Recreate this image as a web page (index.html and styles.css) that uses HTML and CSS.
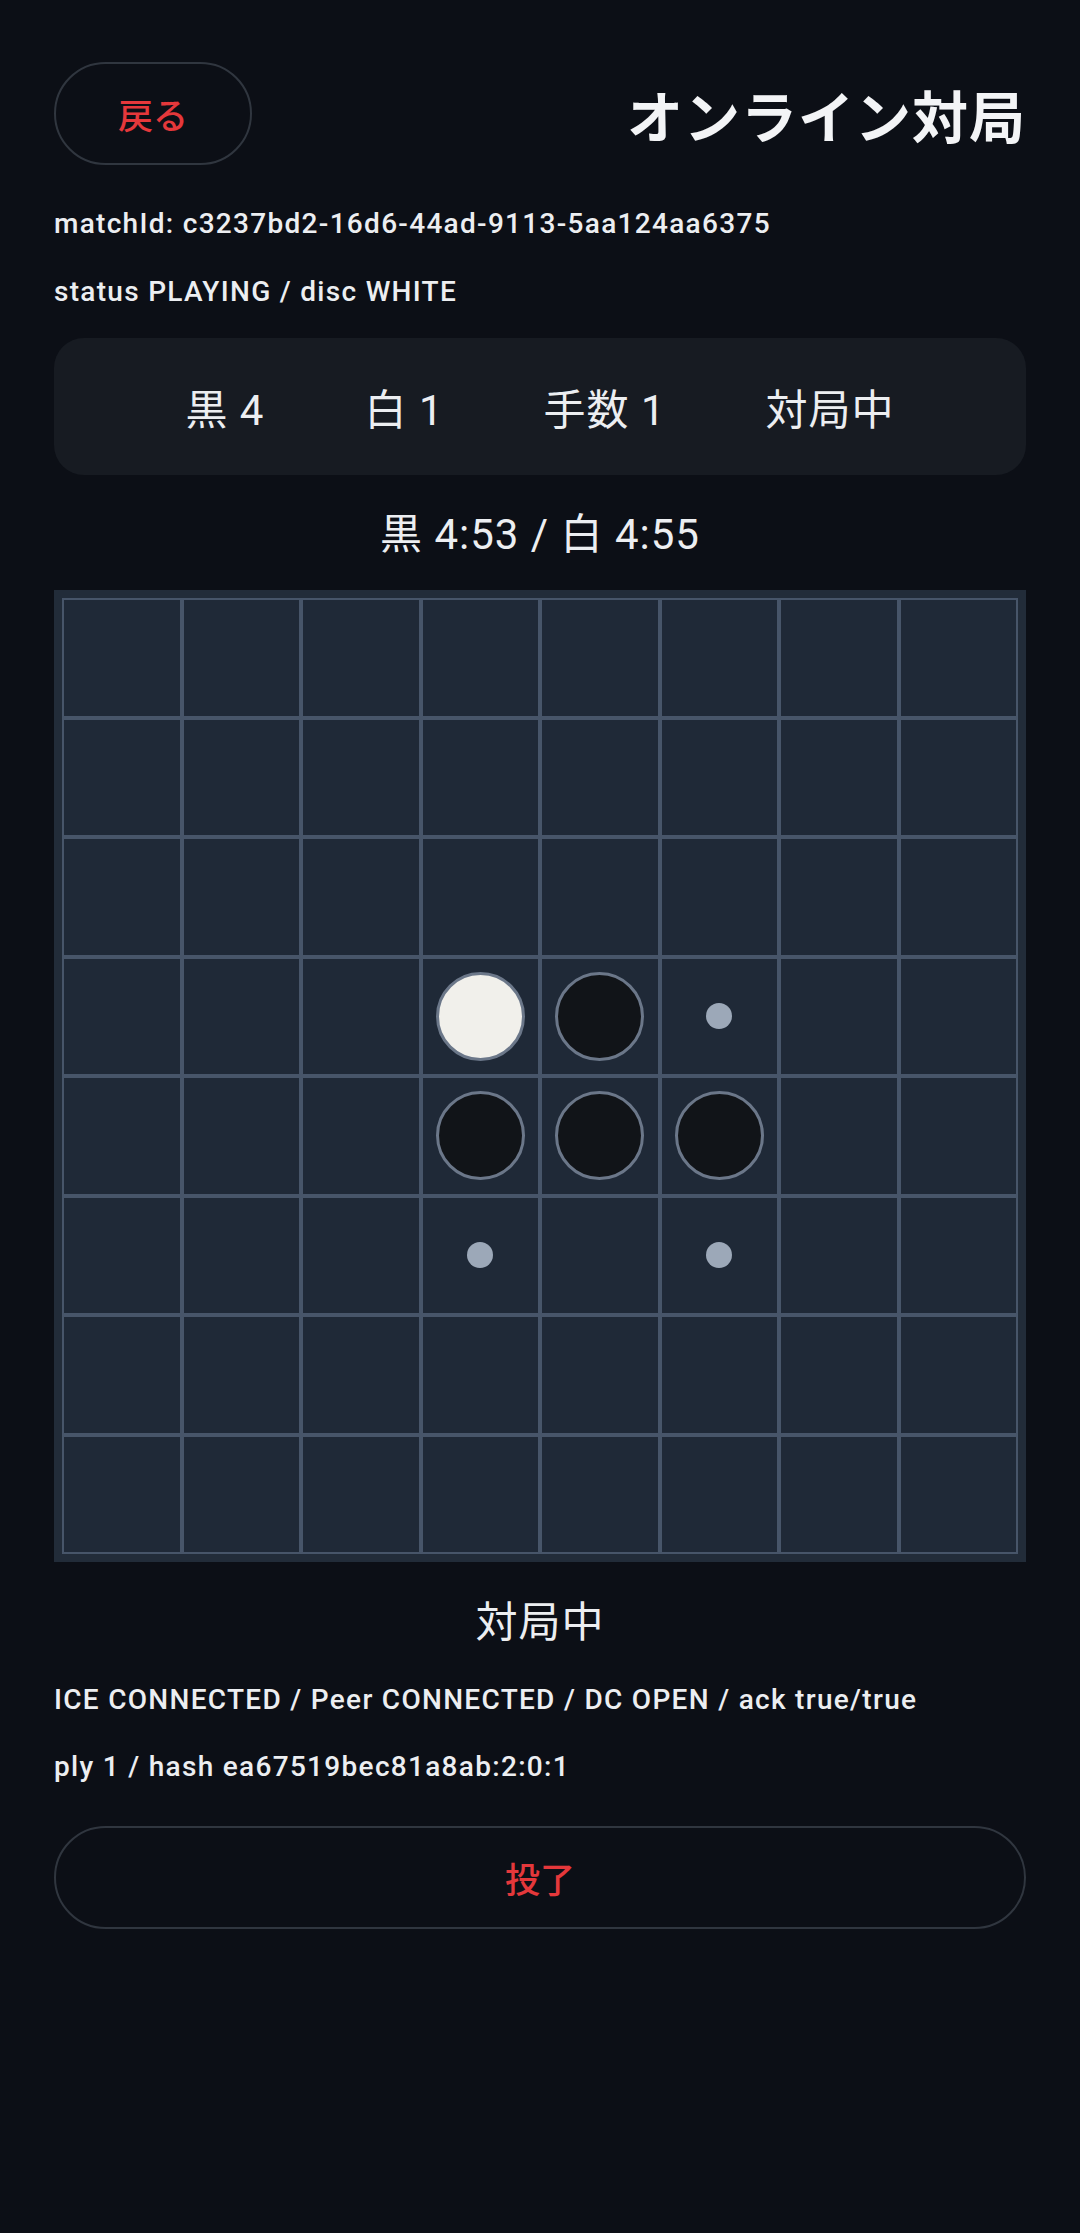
FILE: index.html
```html
<!DOCTYPE html>
<html lang="ja">
	<head>
		<meta charset="utf-8">
		<title>オンライン対局</title>
		<link rel="stylesheet" href="styles.css">
	</head>
	<body>
		<div id="screen">
			<div class="header">
				<button class="pill back">戻る</button>
				<h1 class="title">オンライン対局</h1>
			</div>

			<p class="info match_id">matchId: c3237bd2-16d6-44ad-9113-5aa124aa6375</p>
			<p class="info status_line">status PLAYING / disc WHITE</p>

			<div class="score_card">
				<span>黒 4</span>
				<span>白 1</span>
				<span>手数 1</span>
				<span>対局中</span>
			</div>

			<div class="clock">黒 4:53 / 白 4:55</div>

			<div class="board">
				<!-- row 1 -->
				<div class="cell"></div><div class="cell"></div><div class="cell"></div><div class="cell"></div>
				<div class="cell"></div><div class="cell"></div><div class="cell"></div><div class="cell"></div>
				<!-- row 2 -->
				<div class="cell"></div><div class="cell"></div><div class="cell"></div><div class="cell"></div>
				<div class="cell"></div><div class="cell"></div><div class="cell"></div><div class="cell"></div>
				<!-- row 3 -->
				<div class="cell"></div><div class="cell"></div><div class="cell"></div><div class="cell"></div>
				<div class="cell"></div><div class="cell"></div><div class="cell"></div><div class="cell"></div>
				<!-- row 4 -->
				<div class="cell"></div><div class="cell"></div><div class="cell"></div>
				<div class="cell"><span class="disc white"></span></div>
				<div class="cell"><span class="disc black"></span></div>
				<div class="cell"><span class="hint"></span></div>
				<div class="cell"></div><div class="cell"></div>
				<!-- row 5 -->
				<div class="cell"></div><div class="cell"></div><div class="cell"></div>
				<div class="cell"><span class="disc black"></span></div>
				<div class="cell"><span class="disc black"></span></div>
				<div class="cell"><span class="disc black"></span></div>
				<div class="cell"></div><div class="cell"></div>
				<!-- row 6 -->
				<div class="cell"></div><div class="cell"></div><div class="cell"></div>
				<div class="cell"><span class="hint"></span></div>
				<div class="cell"></div>
				<div class="cell"><span class="hint"></span></div>
				<div class="cell"></div><div class="cell"></div>
				<!-- row 7 -->
				<div class="cell"></div><div class="cell"></div><div class="cell"></div><div class="cell"></div>
				<div class="cell"></div><div class="cell"></div><div class="cell"></div><div class="cell"></div>
				<!-- row 8 -->
				<div class="cell"></div><div class="cell"></div><div class="cell"></div><div class="cell"></div>
				<div class="cell"></div><div class="cell"></div><div class="cell"></div><div class="cell"></div>
			</div>

			<div class="game_state">対局中</div>

			<p class="info conn_line">ICE CONNECTED / Peer CONNECTED / DC OPEN / ack true/true</p>
			<p class="info ply_line">ply 1 / hash ea67519bec81a8ab:2:0:1</p>

			<button class="pill resign">投了</button>
		</div>
	</body>
</html>
```

FILE: styles.css
```css
html, body { margin: 0; padding: 0; background-color: #0c0f16; }

body { font-family: Roboto, "Noto Sans CJK JP", sans-serif; color: #eceef1; }

#screen { display: flex; flex-direction: column; padding: 62px 54px; }

.header { display: flex; justify-content: space-between; align-items: center; height: 103px; }

.title { margin: 0; font-size: 56px; font-weight: 700; color: #f3f4f6; line-height: 1; letter-spacing: 1px; font-family: "Noto Sans CJK JP", sans-serif; }

.pill { background: transparent; border: 2px solid #30363f; border-radius: 52px; color: #e5383b; font-family: "Noto Sans CJK JP", sans-serif; font-size: 35px; font-weight: 500; height: 103px; padding: 0; }

.back { width: 198px; }

.resign { width: 100%; margin-top: 41px; }

.info { margin: 0; font-size: 28px; font-weight: 500; letter-spacing: 1.3px; line-height: 36px; white-space: nowrap; }

.match_id { margin-top: 41px; }

.status_line { margin-top: 32px; }

.conn_line { margin-top: 31px; }

.ply_line { margin-top: 31px; }

.score_card { display: flex; justify-content: center; align-items: center; gap: 100px; height: 137px; margin-top: 28px; background-color: #171b22; border-radius: 30px; font-size: 42px; letter-spacing: 1px; }

.clock, .game_state { font-size: 42px; line-height: 56px; text-align: center; letter-spacing: 1px; }

.clock { margin-top: 32px; }

.game_state { margin-top: 33px; }

.board { display: grid; grid-template-columns: repeat(8, 1fr); margin-top: 27px; padding: 8px; background-color: #222c39; aspect-ratio: 1; box-sizing: border-box; }

.cell { display: flex; justify-content: center; align-items: center; border: 2px solid #475569; background-color: #1f2937; aspect-ratio: 1; }

.disc { width: 89px; height: 89px; border-radius: 50%; border: 3px solid #6b7789; box-sizing: border-box; }

.white { background-color: #f1f0eb; }

.black { background-color: #111418; }

.hint { width: 26px; height: 26px; border-radius: 50%; background-color: #9ca8b8; }
```
